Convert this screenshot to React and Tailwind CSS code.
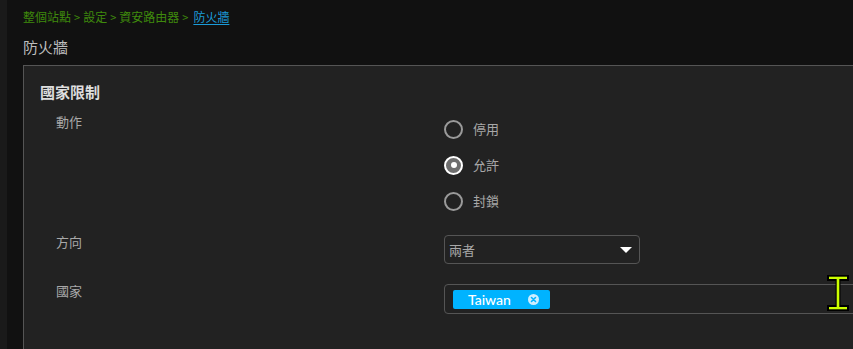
import React, { useState } from 'react';

const cjk = { fontFamily: '"Noto Sans CJK TC", "Noto Sans", sans-serif' };

function Radio({ label, checked, onSelect }) {
    return (
        <button type="button" onClick={onSelect} className="h-[36px] flex items-center gap-[10px] text-left">
            {checked ? (
                <span className="w-[19px] h-[19px] rounded-full border-2 border-white bg-[#6e6e6e] flex items-center justify-center">
                    <span className="w-[6px] h-[6px] rounded-full bg-white" />
                </span>
            ) : (
                <span className="w-[19px] h-[19px] rounded-full border-2 border-[#9a9a9a]" />
            )}
            <span className="text-[13px] text-[#a8a8a8] leading-[20px]">{label}</span>
        </button>
    );
}

export default function App() {
    const [action, setAction] = useState('allow');

    return (
        <div className="w-[853px] h-[349px] flex overflow-hidden bg-[#111111]" style={cjk}>
            <div className="w-[7px] shrink-0 bg-[#1a1a1a]" />
            <div className="flex-1 pl-[16px] overflow-hidden">
                {/* breadcrumb */}
                <div className="h-[34px] pt-[9px] text-[12px] leading-[16px] text-[#3f8a0c] whitespace-nowrap">
                    <span>整個站點</span>
                    <span className="mx-[3px] text-[11px]">&gt;</span>
                    <span>設定</span>
                    <span className="mx-[3px] text-[11px]">&gt;</span>
                    <span>資安路由器</span>
                    <span className="ml-[3px] mr-[5px] text-[11px]">&gt;</span>
                    <a href="#" className="text-[#1b9bd8] underline underline-offset-2">防火牆</a>
                </div>

                <h1 className="text-[15px] leading-[20px] text-[#bdbdbd] mt-[3px]">防火牆</h1>

                <div className="mt-[8px] w-[1000px] border-l border-t border-[#555555] bg-[#222222] pl-[16px] pt-[16px] pb-[40px]">
                    <h2 className="text-[15px] leading-[20px] font-bold text-[#dedede]">國家限制</h2>

                    <div className="flex items-start mt-[10px]">
                        <div className="w-[388px] ml-[16px] text-[13px] leading-[20px] text-[#a8a8a8]">動作</div>
                        <div className="flex flex-col -mt-[1px]">
                            <Radio label="停用" checked={action === 'off'} onSelect={() => setAction('off')} />
                            <Radio label="允許" checked={action === 'allow'} onSelect={() => setAction('allow')} />
                            <Radio label="封鎖" checked={action === 'block'} onSelect={() => setAction('block')} />
                        </div>
                    </div>

                    <div className="flex items-start mt-[13px]">
                        <div className="w-[388px] ml-[16px] text-[13px] leading-[20px] text-[#a8a8a8]">方向</div>
                        <div className="mt-[3px] w-[196px] h-[29px] border border-[#555555] rounded-[4px] flex items-center justify-between pl-[4px] pr-[7px]">
                            <span className="text-[13px] text-[#a8a8a8]">兩者</span>
                            <svg width="12" height="6" viewBox="0 0 12 6">
                                <path d="M0 0 L12 0 L6 6 Z" fill="#ffffff" />
                            </svg>
                        </div>
                    </div>

                    <div className="flex items-start mt-[17px]">
                        <div className="w-[388px] ml-[16px] text-[13px] leading-[20px] text-[#a8a8a8]">國家</div>
                        <div className="mt-[3px] flex-1 h-[30px] border border-[#555555] rounded-[4px] flex items-center pl-[8px]">
                            <span className="h-[19px] w-[97px] bg-[#00b3ff] rounded-[2px] flex items-center pl-[15px] pr-[11px] justify-between">
                                <span className="text-[14px] font-medium text-white" style={{ fontFamily: 'Lato, "Noto Sans", sans-serif' }}>Taiwan</span>
                                <svg width="11" height="11" viewBox="0 0 11 11">
                                    <circle cx="5.5" cy="5.5" r="5.5" fill="#cdeeff" />
                                    <path d="M3.5 3.5 L7.5 7.5 M7.5 3.5 L3.5 7.5" stroke="#00b3ff" strokeWidth="1.6" strokeLinecap="round" />
                                </svg>
                            </span>
                        </div>
                    </div>
                </div>
            </div>

            {/* mouse cursor (I-beam) */}
            <svg className="absolute left-[826px] top-[274px]" width="24" height="38" viewBox="0 0 24 38">
                <path d="M1 1 H23 V7 H14.5 V31 H23 V37 H1 V31 H9.5 V7 H1 Z" fill="#000000" />
                <rect x="3" y="2.7" width="18" height="2.3" fill="#ccff00" />
                <rect x="10.7" y="4" width="2.6" height="30" fill="#ccff00" />
                <rect x="3" y="33" width="18" height="2.3" fill="#ccff00" />
            </svg>
        </div>
    );
}
